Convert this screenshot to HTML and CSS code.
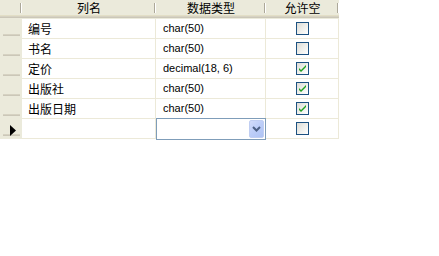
FILE: index.html
```html
<!DOCTYPE html>
<html>
<head>
<meta charset="utf-8">
<link rel="stylesheet" href="styles.css">
</head>
<body>
<div class="grid">
  <div class="row head">
    <div class="hc rhh"></div>
    <div class="hc c1">列名</div>
    <div class="hc c2">数据类型</div>
    <div class="hc c3">允许空</div>
  </div>
  <div class="row">
    <div class="rh"></div>
    <div class="cell c1 zh">编号</div>
    <div class="cell c2">char(50)</div>
    <div class="cell c3"><span class="cb"></span></div>
  </div>
  <div class="row">
    <div class="rh"></div>
    <div class="cell c1 zh">书名</div>
    <div class="cell c2">char(50)</div>
    <div class="cell c3"><span class="cb"></span></div>
  </div>
  <div class="row">
    <div class="rh"></div>
    <div class="cell c1 zh">定价</div>
    <div class="cell c2">decimal(18, 6)</div>
    <div class="cell c3"><span class="cb"><svg class="tick" width="11" height="11" viewBox="0 0 11 11"><path d="M2 5 L4 7 L9 2 L9 4 L4 9 L2 7 Z" fill="#21a121"/></svg></span></div>
  </div>
  <div class="row">
    <div class="rh"></div>
    <div class="cell c1 zh">出版社</div>
    <div class="cell c2">char(50)</div>
    <div class="cell c3"><span class="cb"><svg class="tick" width="11" height="11" viewBox="0 0 11 11"><path d="M2 5 L4 7 L9 2 L9 4 L4 9 L2 7 Z" fill="#21a121"/></svg></span></div>
  </div>
  <div class="row">
    <div class="rh"></div>
    <div class="cell c1 zh">出版日期</div>
    <div class="cell c2">char(50)</div>
    <div class="cell c3"><span class="cb"><svg class="tick" width="11" height="11" viewBox="0 0 11 11"><path d="M2 5 L4 7 L9 2 L9 4 L4 9 L2 7 Z" fill="#21a121"/></svg></span></div>
  </div>
  <div class="row">
    <div class="rh cur"><svg width="6" height="11" viewBox="0 0 6 11"><path d="M0 0 L6 5.5 L0 11 Z" fill="#000"/></svg></div>
    <div class="cell c1 zh"></div>
    <div class="cell c2 editing">
      <div class="combo"><span class="btn"><svg width="9" height="6" viewBox="0 0 9 6"><path d="M1 1 L4.5 4.5 L8 1" fill="none" stroke="#4d6185" stroke-width="2"/></svg></span></div>
    </div>
    <div class="cell c3"><span class="cb"></span></div>
  </div>
</div>
</body>
</html>
```

FILE: styles.css
```css
html, body {
  margin: 0;
  padding: 0;
  background: #ffffff;
}
body {
  width: 439px;
  height: 256px;
  overflow: hidden;
  font-family: "Liberation Sans", "Noto Sans CJK SC", sans-serif;
  font-size: 11px;
  color: #000;
}
.grid {
  width: 339px;
  display: flex;
  flex-direction: column;
}
.row {
  display: flex;
  height: 20px;
}
.row.head {
  height: 19px;
  background:
    linear-gradient(to bottom, #ebeadb 0, #ebeadb 15px, #e2dec6 15px, #e2dec6 16px, #d6d2c2 16px, #d6d2c2 17px, #cbc7b8 17px, #cbc7b8 18px, #ebeadb 18px);
}
.hc {
  box-sizing: border-box;
  height: 19px;
  line-height: 16px;
  text-align: center;
  font-family: "Noto Sans CJK SC", sans-serif;
  font-size: 12px;
  background:
    linear-gradient(#aca899, #aca899) right 1px top 3px / 1px 10px no-repeat,
    linear-gradient(#ffffff, #ffffff) right 0 top 3px / 1px 10px no-repeat;
}
.rhh { width: 22px; }
.c1 { width: 134px; }
.c2 { width: 110px; }
.c3 { width: 73px; }
.rh {
  width: 22px;
  height: 20px;
  box-sizing: border-box;
  background:
    linear-gradient(to bottom, transparent 0, transparent 15px, #d6d2c2 15px, #d6d2c2 16px, #cbc7b8 16px, #cbc7b8 17px, transparent 17px) 3px 0 / 17px 20px no-repeat,
    #ebeadb;
  display: flex;
  align-items: center;
  padding-left: 10px;
}
.rh.cur { padding-top: 2px; }
.cell {
  box-sizing: border-box;
  height: 20px;
  border-right: 1px solid #ece9d8;
  border-bottom: 1px solid #ece9d8;
  padding-left: 7px;
  line-height: 19px;
  white-space: nowrap;
  background: #fff;
}
.cell.c1 { padding-left: 6px; }
.zh {
  font-family: "Noto Sans CJK SC", sans-serif;
  font-size: 12px;
}
.cell.c3 {
  display: flex;
  justify-content: center;
  align-items: center;
  padding-left: 0;
  padding-right: 0;
}
.cb {
  box-sizing: border-box;
  width: 13px;
  height: 13px;
  border: 1px solid #1c5180;
  background: linear-gradient(135deg, #dcdcd7 0%, #f2f2ee 60%, #ffffff 100%);
  display: flex;
  align-items: center;
  justify-content: center;
}
.editing { position: relative; padding-left: 0; }
.combo {
  position: absolute;
  left: 0;
  top: -1px;
  width: 110px;
  height: 22px;
  box-sizing: border-box;
  border: 1px solid #7f9db9;
  background: #fff;
  display: flex;
  justify-content: flex-end;
  padding: 1px;
}
.btn {
  width: 15px;
  height: 18px;
  box-sizing: border-box;
  border-radius: 2px;
  background: linear-gradient(135deg, #d2dcfa 0%, #bccdf8 50%, #aec3f4 100%);
  border: 1px solid #c0cef2;
  display: flex;
  align-items: center;
  justify-content: center;
}
```
